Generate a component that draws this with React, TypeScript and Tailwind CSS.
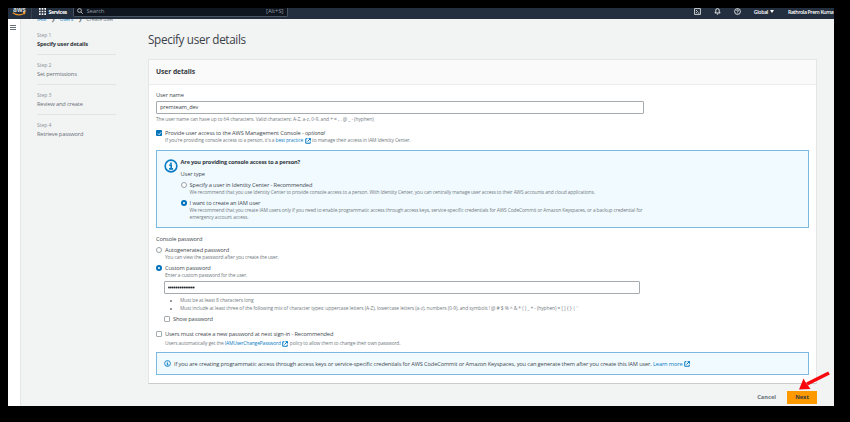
import React from "react";

const helper = "whitespace-nowrap text-[4.9px] leading-[7px] tracking-[-0.128px] text-[#737b82]";
const label = "whitespace-nowrap text-[5.7px] leading-[8px] tracking-[-0.13px] text-[#434a50]";

function External() {
  return (
    <svg viewBox="0 0 12 12" className="size-[6px] shrink-0" fill="none" stroke="#0a7cc4" strokeWidth="2">
      <path d="M5 1.5H1.500v9h9V7M7 1.200h4v4M10.800 1.200 5 7" />
    </svg>
  );
}

function Info({ className, weight }: { className: string; weight: number }) {
  return (
    <svg viewBox="0 0 24 24" className={className} fill="none" stroke="#0a7cc4" strokeWidth={weight}>
      <circle cx="12" cy="12" r="10" />
      <path d="M9 10.500h3.300V17M8.700 17h6.800M12 5.800v2.600" />
    </svg>
  );
}

function Radio({ on }: { on?: boolean }) {
  return on ? (
    <span className="size-[6px] shrink-0 rounded-full border-2 border-[#0073bb] bg-white" />
  ) : (
    <span className="size-[6px] shrink-0 rounded-full border border-[#9aa2a7] bg-white" />
  );
}

function Check({ on }: { on?: boolean }) {
  return on ? (
    <span className="flex size-[6px] shrink-0 items-center justify-center rounded-[1px] bg-[#0073bb]">
      <svg viewBox="0 0 12 12" className="size-[5px]" fill="none" stroke="white" strokeWidth="2">
        <path d="m2 6 3 3 5-6" />
      </svg>
    </span>
  ) : (
    <span className="size-[6px] shrink-0 rounded-[1px] border border-[#a5abaf] bg-white" />
  );
}

function Step({ n, name, active, last }: { n: number; name: string; active?: boolean; last?: boolean }) {
  return (
    <div className={"h-[30px] w-[79px] pt-[6px] " + (last ? "" : "border-b border-[#e0e4e4]")}>
      <div className="text-[5px] leading-[8px] tracking-[-0.05px] text-[#8a9196]">Step {n}</div>
      <div className={"mt-px whitespace-nowrap text-[5.700px] leading-[9px] " + (active ? "font-bold tracking-[-0.2px] text-[#33393f]" : "tracking-[-0.15px] text-[#687078]")}>{name}</div>
    </div>
  );
}

function TopBar() {
  return (
    <header className="flex h-[11px] shrink-0 items-center overflow-hidden bg-[#232f3e] text-[5.200px] leading-[6px] text-white">
      <svg viewBox="0 0 14 8" className="ml-[3.500px] h-[8px] w-[14px] self-start">
        <text x="1" y="3.500" fontSize="6.500" fontWeight="bold" fill="#d5dbdb" fontFamily="Open Sans, sans-serif">aws</text>
        <path d="M.8 4.700c3.600 2.600 8.200 2.700 11.700.5M11 4.500l2-.1-.6 1.800" fill="none" stroke="#f0962a" strokeWidth="1.100" />
      </svg>
      <span className="ml-[5px] h-full w-px bg-[#37424f]" />
      <svg viewBox="0 0 6 6" className="mb-[4px] ml-[7px] size-[7px]" fill="#fff">
        <path d="M0 0h1.400v1.400H0zM2.300 0h1.400v1.400H2.300zM4.600 0H6v1.400H4.600zM0 2.300h1.400v1.400H0zM2.300 2.300h1.400v1.400H2.300zM4.600 2.300H6v1.400H4.600zM0 4.600h1.400V6H0zM2.300 4.600h1.400V6H2.300zM4.600 4.600H6V6H4.600z" />
      </svg>
      <span className="mb-[4px] ml-[3px] w-[24px] font-bold tracking-[-0.35px]">Services</span>
      <div className="flex h-[9px] w-[215px] items-center self-start rounded-b-[2px] border-x border-b border-[#4a5564] bg-[#0f1620] px-[3px] pb-[2px]">
        <svg viewBox="0 0 12 12" className="size-[6px]" fill="none" stroke="#d5dbdb" strokeWidth="1.600">
          <circle cx="5" cy="5" r="3.800" /><path d="m8 8 3.500 3.500" />
        </svg>
        <span className="ml-[4px] text-[6px] tracking-[-0.2px] text-[#929ba3]">Search</span>
        <span className="ml-auto text-[5.800px] text-[#929ba3]">[Alt+S]</span>
      </div>
      <div className="mb-[4px] ml-auto flex items-center">
        <svg viewBox="0 0 12 12" className="size-[7px]" fill="none" stroke="#fff" strokeWidth="1.300">
          <path d="M1 1h10v10H1zM3.500 3.500 6 6 3.500 8.500M6.500 8.700h2.500" />
        </svg>
        <svg viewBox="0 0 12 12" className="ml-[13px] size-[7px]" fill="none" stroke="#fff" strokeWidth="1.500">
          <path d="M1.500 8.500h9L9 6.500V4a3 3 0 0 0-6 0v2.500zM5 10.500h2" />
        </svg>
        <svg viewBox="0 0 12 12" className="ml-[13px] size-[7px]" fill="none" stroke="#fff" strokeWidth="1.400">
          <circle cx="6" cy="6" r="5" /><path d="M4.500 4.800c0-2 3-2 3 0 0 1-1.500 1-1.500 2.200M6 8v1.200" />
        </svg>
        <span className="ml-[13px] font-semibold tracking-[-0.3px]">Global</span>
        <span className="ml-[2px] border-x-[2px] border-t-[3px] border-x-transparent border-t-white" />
        <span className="ml-[14px] w-[46px] whitespace-nowrap font-semibold tracking-[-0.370px]">Rathrola Prem Kuma</span>
      </div>
    </header>
  );
}

export default function App() {
  return (
    <div className="h-[422px] w-[850px] overflow-hidden bg-black px-[8px] pt-[8px] font-['Open_Sans',sans-serif]">
      <div className="relative flex h-[398px] w-[826px] flex-col overflow-hidden bg-[#f2f3f3]">
        <TopBar />
        <div className="flex min-h-0 flex-1">
          <aside className="flex w-[13px] shrink-0 flex-col items-start gap-px border-r border-[#e3e6e6] bg-white pl-[2px] pt-[6px]">
            <i className="h-px w-[6px] bg-[#687078]" />
            <i className="h-px w-[6px] bg-[#687078]" />
            <i className="h-px w-[6px] bg-[#687078]" />
          </aside>
          <nav className="w-[127px] shrink-0 pl-[16px]">
            <div className="flex h-[6px] gap-[4.600px] overflow-hidden whitespace-nowrap text-[5.300px] leading-[8px] tracking-[-0.080px] text-[#0a7cc4]">
              <span className="-mt-[4px]">IAM</span>
              <span className="-mt-[4px] text-[#687078]">❯</span>
              <span className="-mt-[4px]">Users</span>
              <span className="-mt-[4px] text-[#687078]">❯</span>
              <span className="-mt-[4px] text-[#687078]">Create user</span>
            </div>
            <Step n={1} name="Specify user details" active />
            <Step n={2} name="Set permissions" />
            <Step n={3} name="Review and create" />
            <Step n={4} name="Retrieve password" last />
          </nav>
          <main className="w-[669px] shrink-0">
            <h1 className="h-[40px] pt-[11px] text-[11.700px] leading-[18px] tracking-[-0.330px] text-[#3b4147]">Specify user details</h1>
            <section className="h-[325px] border border-[#e3e6e6] border-b-[#c8cccc] bg-white">
              <h2 className="h-[25px] border-b border-[#eaeded] bg-[#fafafa] pl-[7px] pt-[7px] text-[6.700px] font-bold leading-[10px] tracking-[-0.040px] text-[#33393f]">User details</h2>
              <div className="pl-[7px] pr-[7px] pt-[6px]">
                <div className={label}>User name</div>
                <div className="mt-[2px] flex h-[13px] w-[488px] items-center rounded-[1px] border border-[#a5abaf] pl-[3px] text-[5.600px] tracking-[-0.080px] text-[#3b4147]">premteam_dev</div>
                <div className="mt-[2px] whitespace-nowrap text-[4.900px] leading-[7px] tracking-[-0.085px] text-[#737b82]">The user name can have up to 64 characters. Valid characters: A-Z, a-z, 0-9, and + = , . @ _ - (hyphen)</div>

                <div className="mt-[6px] flex items-center gap-[3px]">
                  <Check on />
                  <span className={label}>Provide user access to the AWS Management Console - <i>optional</i></span>
                </div>
                <div className={helper + " flex items-center gap-[1.500px] pl-[9px]"}>
                  <span>If you're providing console access to a person, it's a <span className="text-[#0a7cc4]">best practice</span></span>
                  <External />
                  <span>to manage their access in IAM Identity Center.</span>
                </div>

                <div className="mt-[6px] flex h-[78px] border border-[#7db8e0] bg-[#f1faff] pl-[7px] pt-[7px]">
                  <Info className="mt-px size-[14px] shrink-0" weight={2.800} />
                  <div className="pl-[2.600px]">
                    <div className="h-[8px] whitespace-nowrap text-[5.600px] font-bold leading-[8px] tracking-[-0.175px] text-[#33393f]">Are you providing console access to a person?</div>
                    <div className={label + " mt-[4px]"}>User type</div>
                    <div className="mt-[3px] flex items-center gap-[3px]"><Radio /><span className={label}>Specify a user in Identity Center - Recommended</span></div>
                    <div className={helper + " pl-[9px]"}>We recommend that you use Identity Center to provide console access to a person. With Identity Center, you can centrally manage user access to their AWS accounts and cloud applications.</div>
                    <div className="mt-[3px] flex items-center gap-[3px]"><Radio on /><span className={label}>I want to create an IAM user</span></div>
                    <div className={helper + " pl-[9px]"}>We recommend that you create IAM users only if you need to enable programmatic access through access keys, service-specific credentials for AWS CodeCommit or Amazon Keyspaces, or a backup credential for<br />emergency account access.</div>
                  </div>
                </div>

                <div className={label + " mt-[7px]"}>Console password</div>
                <div className="mt-[3px] flex items-center gap-[3px]"><Radio /><span className={label}>Autogenerated password</span></div>
                <div className={helper + " pl-[9px]"}>You can view the password after you create the user.</div>
                <div className="mt-[3px] flex items-center gap-[3px]"><Radio on /><span className={label}>Custom password</span></div>
                <div className={helper + " pl-[9px]"}>Enter a custom password for the user.</div>
                <div className="ml-[8px] mt-[2px] flex h-[13px] w-[476px] items-center rounded-[1px] border border-[#a5abaf] pl-[3px]">
                  <svg viewBox="0 0 27 3" className="h-[3px] w-[27px]" fill="#22272b">
                    {Array.from({ length: 14 }, (_, i) => (
                      <circle key={i} cx={1 + i * 1.9} cy="1.5" r="0.9" />
                    ))}
                  </svg>
                </div>
                <ul className="ml-[24px] mt-[3px] list-disc whitespace-nowrap text-[4.900px] leading-[7px] tracking-[-0.090px] text-[#737b82]">
                  <li>Must be at least 8 characters long</li>
                  <li className="mt-[1px]">{"Must include at least three of the following mix of character types: uppercase letters (A-Z), lowercase letters (a-z), numbers (0-9), and symbols ! @ # $ % ^ & * ( ) _ + - (hyphen) = [ ] { } | '"}</li>
                </ul>
                <div className="ml-[8px] mt-[3px] flex items-center gap-[3px]"><Check /><span className={label}>Show password</span></div>

                <div className="mt-[7px] flex items-center gap-[3px]"><Check /><span className={label}>Users must create a new password at next sign-in - Recommended</span></div>
                <div className={helper + " mt-[2px] flex items-center gap-[1.500px] pl-[9px]"}>
                  <span>Users automatically get the <span className="text-[#0a7cc4]">IAMUserChangePassword</span></span>
                  <External />
                  <span>policy to allow them to change their own password.</span>
                </div>
                <div className="mt-[5px] flex h-[23px] items-center border border-[#7db8e0] bg-[#f1faff] pl-[7px]">
                  <Info className="size-[7px] shrink-0" weight={3} />
                  <span className="ml-[3px] mr-[1.500px] whitespace-nowrap text-[5.700px] leading-[8px] tracking-[-0.136px] text-[#434a50]">If you are creating programmatic access through access keys or service-specific credentials for AWS CodeCommit or Amazon Keyspaces, you can generate them after you create this IAM user. <span className="text-[#0a7cc4]">Learn more</span></span>
                  <External />
                </div>
              </div>
            </section>
            <div className="flex items-start justify-end pt-[7px] text-[5.700px] font-bold leading-[8px] text-[#687078]">
              <span className="mr-[11px] mt-[2px]">Cancel</span>
              <button className="h-[13px] w-[30px] bg-[#ff9900] pb-px text-[#33393f]">Next</button>
            </div>
          </main>
        </div>
        <svg viewBox="0 0 36 22" className="absolute left-[789px] top-[362px] h-[22px] w-[36px]">
          <path d="M32 3 10 14" stroke="#f8070d" strokeWidth="3.600" />
          <path d="M2 19.500 6.500 8.500l2 3.500 5 7z" fill="#f8070d" />
        </svg>
      </div>
    </div>
  );
}
